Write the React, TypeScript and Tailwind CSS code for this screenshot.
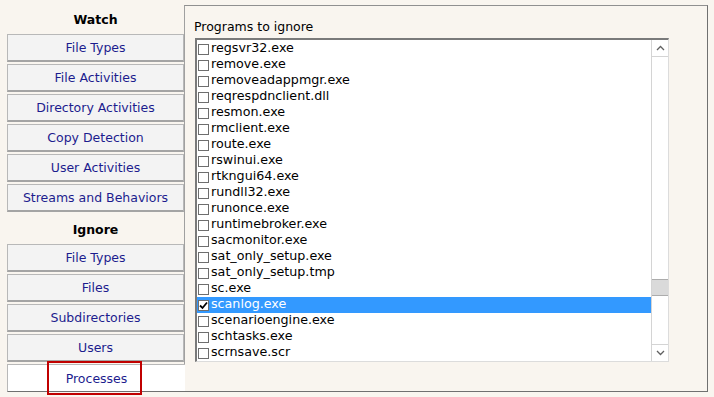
import React from "react";

const watch = ["File Types", "File Activities", "Directory Activities", "Copy Detection", "User Activities", "Streams and Behaviors"];
const ignore = ["File Types", "Files", "Subdirectories", "Users"];
const items = [
  "regsvr32.exe", "remove.exe", "removeadappmgr.exe", "reqrespdnclient.dll", "resmon.exe", "rmclient.exe", "route.exe", "rswinui.exe", "rtkngui64.exe", "rundll32.exe", "runonce.exe", "runtimebroker.exe", "sacmonitor.exe", "sat_only_setup.exe", "sat_only_setup.tmp", "sc.exe", "scanlog.exe", "scenarioengine.exe", "schtasks.exe", "scrnsave.scr",
];

const font = { fontFamily: '"DejaVu Sans", Verdana, sans-serif' };

function Btn({ label }: { label: string }) {
  return (
    <div className="h-[28px] flex items-center justify-center pt-[2px] bg-[#f3f3f3] border border-[#b8b8b8] border-b-2 border-b-[#a4a4a4] text-[12.5px] text-[#1c1c8e]">
      {label}
    </div>
  );
}

export default function App() {
  return (
    <div className="w-[714px] h-[397px] bg-[#f9f5ef] flex overflow-hidden" style={font}>
      <div className="w-[177px] ml-[7px] flex flex-col">
        <div className="h-[34px] flex items-center justify-center pt-[6px] font-bold text-[12.5px] text-black">Watch</div>
        <div className="flex flex-col gap-[2px]">
          {watch.map((w) => (
            <Btn key={w} label={w} />
          ))}
        </div>
        <div className="h-[32px] flex items-center justify-center pt-[4px] font-bold text-[12.5px] text-black">Ignore</div>
        <div className="flex flex-col gap-[2px]">
          {ignore.map((w) => (
            <Btn key={w} label={w} />
          ))}
          <div className="relative z-10 mr-[-1px] h-[28px] flex items-center justify-center pt-[2px] bg-white border border-r-0 border-[#b8b8b8] border-b-[#707070] text-[12.5px] text-[#1c1c8e]">
            Processes
            <div className="absolute left-[39px] top-[-4px] w-[95px] h-[34px] border-2 border-[#c00000]" />
          </div>
        </div>
      </div>
      <div className="mt-[5px] mr-[6px] h-[387px] flex-1 border border-[#707070] border-l-[#a0a0a0] border-t-[#909090] flex flex-col pl-[10px]">
        <div className="h-[32px] flex items-end pb-[1px] -ml-[1px] text-[12.5px] text-black">Programs to ignore</div>
        <div className="w-[474px] h-[324px] bg-white border-t-2 border-l-2 border-[#7a7a7a] border-r border-b border-r-[#dcdcdc] border-b-[#dcdcdc] flex">
          <div className="flex-1 flex flex-col pt-[1px]">
            {items.map((it) => {
              const sel = it === "scanlog.exe";
              return (
                <div key={it} className={`h-[16px] flex items-center text-[12.7px] leading-none ${sel ? "bg-[#3399ff] text-white" : "text-black"}`}>
                  <div className="ml-[1px] mr-[2px] w-[11px] h-[11px] border border-[#6e6e6e] bg-white flex items-center justify-center">
                    {sel && (
                      <svg width="9" height="9" viewBox="0 0 9 9">
                        <path d="M1 4.5 L3.5 7 L8 1.5" stroke="#000" strokeWidth="1.8" fill="none" />
                      </svg>
                    )}
                  </div>
                  <span className="pb-[1px]">{it}</span>
                </div>
              );
            })}
          </div>
          <div className="w-[17px] flex flex-col border-l border-[#d4d4d4] bg-white">
            <div className="h-[17px] border-b border-[#d4d4d4] flex items-center justify-center">
              <svg width="9" height="6" viewBox="0 0 9 6">
                <path d="M1 5 L4.5 1.5 L8 5" stroke="#606060" strokeWidth="1.3" fill="none" />
              </svg>
            </div>
            <div className="flex-1 flex flex-col">
              <div className="h-[222px]" />
              <div className="h-[17px] bg-[#dadada] border-y border-[#acacac]" />
            </div>
            <div className="h-[17px] border-t border-[#d4d4d4] flex items-center justify-center">
              <svg width="9" height="6" viewBox="0 0 9 6">
                <path d="M1 1 L4.5 4.5 L8 1" stroke="#606060" strokeWidth="1.3" fill="none" />
              </svg>
            </div>
          </div>
        </div>
      </div>
    </div>
  );
}
